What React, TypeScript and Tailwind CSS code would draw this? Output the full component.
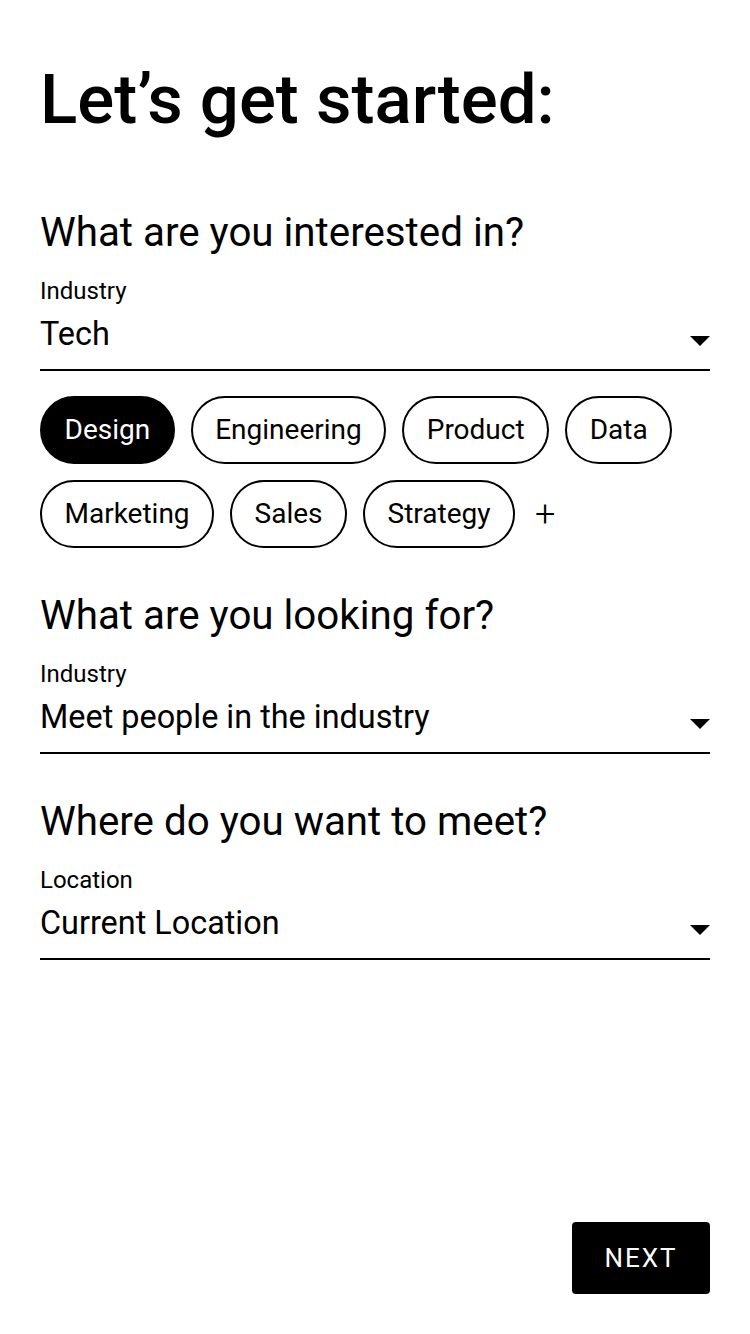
import { useState } from 'react';

const TAGS_ROW = ['Design', 'Engineering', 'Product', 'Data', 'Marketing', 'Sales', 'Strategy'];

function Caret() {
  return (
    <svg width="20" height="10" viewBox="0 0 20 10" className="shrink-0">
      <path d="M0 0 L20 0 L10 10 Z" fill="#000" />
    </svg>
  );
}

function SelectField({ label, value }: { label: string; value: string }) {
  return (
    <div className="mt-[20px]">
      <div className="text-[24px] leading-[28px] text-black">{label}</div>
      <div className="flex items-end justify-between border-b-2 border-black pt-[10px] pb-[16px]">
        <span className="text-[32.4px] leading-[38px] text-black">{value}</span>
        <span className="mb-[7px]"><Caret /></span>
      </div>
    </div>
  );
}

export default function App() {
  const [selected, setSelected] = useState<string[]>(['Design']);

  const toggle = (tag: string) => {
    setSelected(prev => (prev.includes(tag) ? prev.filter(t => t !== tag) : [...prev, tag]));
  };

  return (
    <div className="min-h-[1334px] w-[750px] bg-white px-[40px] flex flex-col" style={{ fontFamily: 'Roboto, "Noto Sans", sans-serif' }}>
      <h1 className="mt-[60px] text-[69px] leading-[80px] font-medium text-black">Let’s get started:</h1>

      <h2 className="mt-[69px] text-[40.3px] leading-[48px] text-black">What are you interested in?</h2>
      <SelectField label="Industry" value="Tech" />

      <div className="mt-[25px] flex flex-wrap gap-[16px] items-center">
        {TAGS_ROW.map(tag => {
          const on = selected.includes(tag);
          return (
            <button
              key={tag}
              onClick={() => toggle(tag)}
              className={
                'h-[68px] px-[22.5px] rounded-full border-2 border-black text-[28px] leading-[32px] ' +
                (on ? 'bg-black text-white' : 'bg-white text-black')
              }
            >
              {tag}
            </button>
          );
        })}
        <span className="ml-[4px] text-[36px] leading-[36px] font-light text-black">+</span>
      </div>

      <h2 className="mt-[44px] text-[40.3px] leading-[48px] text-black">What are you looking for?</h2>
      <SelectField label="Industry" value="Meet people in the industry" />

      <h2 className="mt-[44px] text-[40.3px] leading-[48px] text-black">Where do you want to meet?</h2>
      <SelectField label="Location" value="Current Location" />

      <div className="mt-auto mb-[40px] flex justify-end">
        <button className="w-[138px] h-[72px] rounded-[4px] bg-black text-white text-[26px] font-normal tracking-[2px]">NEXT</button>
      </div>
    </div>
  );
}
